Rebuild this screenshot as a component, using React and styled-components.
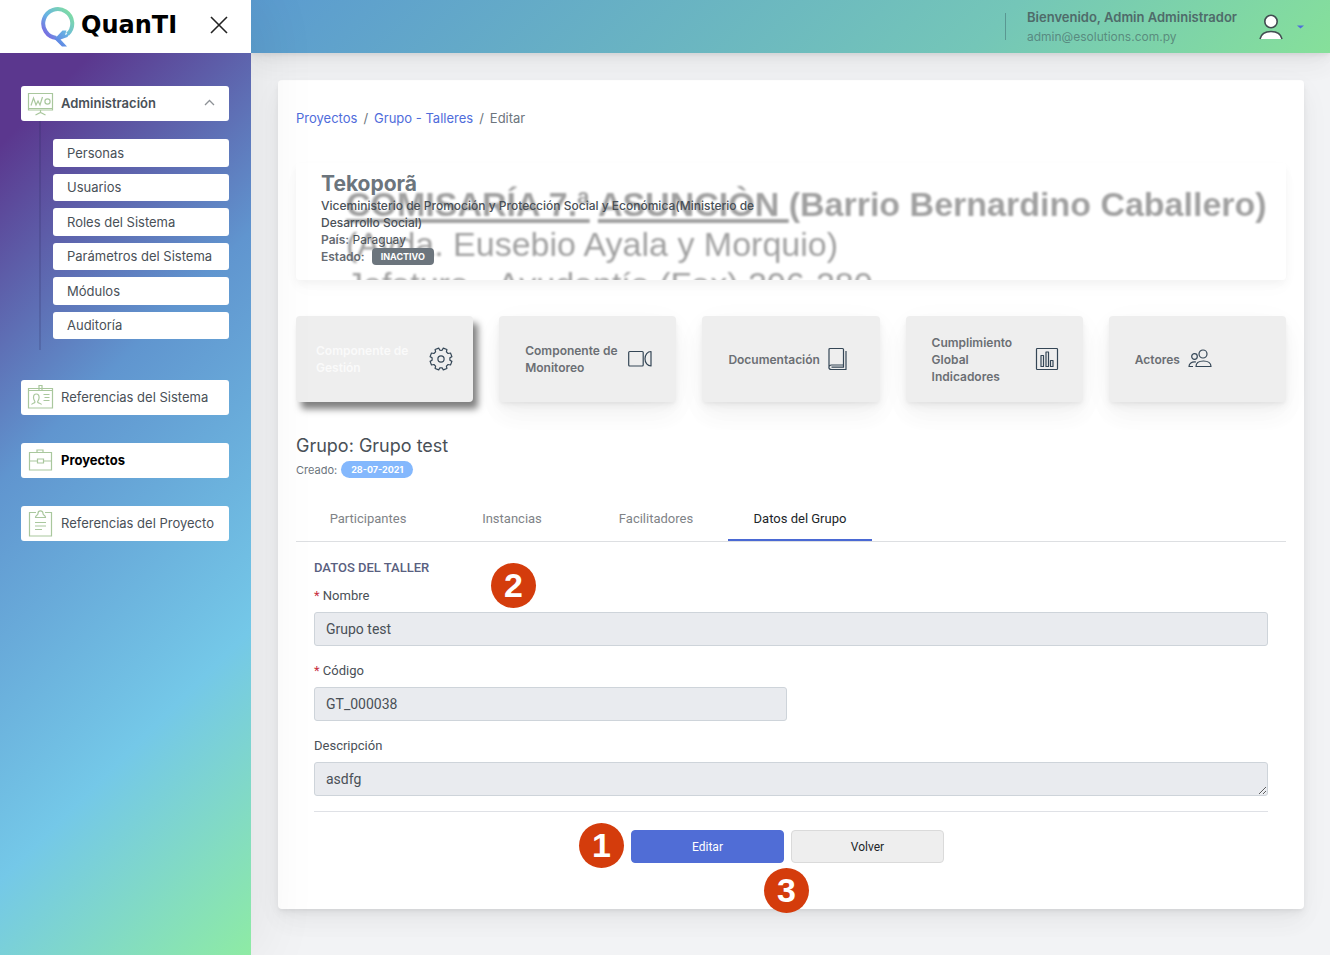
import React, { useState } from 'react';
import styled, { createGlobalStyle, css } from 'styled-components';

const GlobalStyle = createGlobalStyle`
  *, *::before, *::after {
    box-sizing: border-box;
  }
  body {
    margin: 0;
    background: #f2f3f5;
    color: #495057;
    font-family: Inter, "Liberation Sans", sans-serif;
    font-size: 13px;
  }
  button, input, textarea {
    font-family: inherit;
  }
`;

const softShadow = css`
  box-shadow:
    0 8px 35px rgba(4, 9, 20, 0.03),
    0 15px 23px rgba(4, 9, 20, 0.03),
    0 4px 9px rgba(4, 9, 20, 0.05),
    0 2px 3px rgba(4, 9, 20, 0.03);
`;

const Layout = styled.div`
  display: grid;
  grid-template-columns: 251px 1fr;
  min-height: 100vh;
`;

/* sidebar */

const Sidebar = styled.aside`
  position: relative;
  z-index: 2;
  background: linear-gradient(135deg, #5b378e 12%, #6095cf 40%, #74c8e8 73%, #8eeba4 100%);
  box-shadow: 7px 0 60px rgba(0, 0, 0, 0.07);
`;

const LogoBar = styled.div`
  display: flex;
  align-items: center;
  justify-content: space-between;
  height: 53px;
  padding: 0 23px 4px 40px;
  background: #fff;
`;

const Logo = styled.a`
  display: flex;
  align-items: center;
  gap: 5px;
  color: #000;
  font-family: "DejaVu Sans", sans-serif;
  font-size: 24px;
  font-weight: 700;
  line-height: 40px;
  text-decoration: none;

  svg {
    margin-top: 4px;
  }
`;

const IconButton = styled.button`
  display: flex;
  padding: 0;
  border: 0;
  background: none;
  cursor: pointer;
`;

const Menu = styled.nav`
  display: flex;
  flex-direction: column;
  gap: 28px;
  padding: 33px 22px 33px 21px;
`;

const menuBox = css`
  display: flex;
  align-items: center;
  width: 100%;
  border: 0;
  border-radius: 3px;
  background: #fff;
  color: #495057;
  font-size: 13px;
  text-decoration: none;
`;

const MenuItem = styled.a`
  ${menuBox}
  gap: 7px;
  height: 35px;
  padding: 0 14px 2px 6px;
  color: ${(p) => (p.$active ? '#000' : '#495057')};
  font-weight: ${(p) => (p.$active ? 700 : 400)};
`;

const MenuToggle = styled.button`
  ${menuBox}
  gap: 7px;
  height: 35px;
  padding: 0 14px 2px 6px;
  font-weight: 600;
  cursor: pointer;

  span {
    flex: 1;
    text-align: left;
  }
`;

const SubMenu = styled.ul`
  display: grid;
  grid-auto-rows: 1fr;
  gap: 7px;
  height: 229px;
  margin: 0 0 2px 18px;
  padding: 18px 0 11px 12px;
  border-left: 2px solid rgba(40, 40, 90, 0.2);
  list-style: none;
`;

const SubItem = styled.a`
  ${menuBox}
  height: 100%;
  padding: 0 14px;
`;

/* top bar */

const Main = styled.div`
  display: flex;
  flex-direction: column;
  min-width: 0;
`;

const Header = styled.header`
  position: relative;
  z-index: 1;
  display: flex;
  align-items: center;
  justify-content: flex-end;
  height: 53px;
  padding: 0 26px;
  background: linear-gradient(135deg, #5b9bd0, #74c6b8 68%, #86e09a);
  ${softShadow}
`;

const UserInfo = styled.div`
  display: flex;
  flex-direction: column;
  justify-content: center;
  height: 27px;
  padding-left: 21px;
  border-left: 1px solid rgba(50, 80, 90, 0.4);
  color: #4f6b6a;
  line-height: 19px;

  strong {
    font-weight: 600;
  }
  small {
    color: rgba(70, 100, 100, 0.65);
    font-size: 12px;
  }
`;

const UserButton = styled(IconButton)`
  align-items: center;
  gap: 14px;
  margin-left: 22px;
`;

/* content */

const Content = styled.main`
  flex: 1;
  padding: 27px 26px 46px 27px;
`;

const Panel = styled.section`
  padding: 28px 18px 46px;
  border-radius: 4px;
  background: #fff;
  ${softShadow}
`;

const Breadcrumb = styled.nav`
  display: flex;
  gap: 6px;
  line-height: 21px;
  color: #6c757d;

  a {
    color: #4f6cdb;
    text-decoration: none;
  }
`;

const Banner = styled.div`
  position: relative;
  height: 117px;
  padding: 8px 25px;
  overflow: hidden;
  border-radius: 4px;
`;

const BannerFrame = styled.div`
  margin-top: 34px;
  border-radius: 4px;
  box-shadow: 0 4px 9px rgba(4, 9, 20, 0.04), 0 8px 20px rgba(4, 9, 20, 0.02);
`;

const Backdrop = styled.div`
  position: absolute;
  top: 21px;
  left: 50px;
  color: #a0a0a0;
  font-family: "Liberation Sans", sans-serif;
  font-size: 34px;
  line-height: 40px;
  white-space: nowrap;
  filter: blur(1px);

  b u {
    text-decoration-thickness: 4px;
    text-underline-offset: 3px;
    text-decoration-skip-ink: none;
  }
`;

const BannerText = styled.div`
  position: relative;
  max-width: 440px;
  font-size: 12px;
  line-height: 17px;

  h1 {
    margin: 0;
    color: #6c757d;
    font-size: 21px;
    font-weight: 700;
    line-height: 26px;
  }
  p {
    margin: 0;
  }
  b {
    font-weight: 600;
    color: #666b72;
  }
`;

const Org = styled.p`
  font-weight: 500;
`;

const Badge = styled.span`
  display: inline-block;
  margin-left: ${(p) => (p.$pill ? 4 : 7)}px;
  padding: 0 ${(p) => (p.$pill ? 10 : 9)}px;
  border-radius: ${(p) => (p.$pill ? 9 : 4)}px;
  background: ${(p) => (p.$pill ? '#84b8fd' : '#6c757d')};
  color: #fff;
  font-size: 9px;
  font-weight: 700;
  line-height: 17px;
  vertical-align: top;
`;

const Cards = styled.div`
  display: grid;
  grid-template-columns: repeat(5, 1fr);
  gap: 26px;
  margin-top: 36px;
`;

const Card = styled.a`
  display: flex;
  align-items: center;
  gap: 8px;
  height: 86px;
  padding: 0 ${(p) => (p.$active ? '20px' : '24px 0 26px')};
  border-radius: 4px;
  background: #eee;
  color: ${(p) => (p.$active ? '#fafafa' : '#6b6f74')};
  font-size: 12px;
  font-weight: 600;
  line-height: 17px;
  text-decoration: none;
  ${softShadow}
  ${(p) => p.$active && css`
    box-shadow: 5px 7px 7px rgba(0, 0, 0, 0.5);
  `}

  svg {
    flex: none;
  }
`;

const GroupTitle = styled.h2`
  margin: 32px 0 0;
  font-size: 18px;
  font-weight: 400;
  line-height: 24px;
`;

const Created = styled.p`
  margin: 3px 0 0;
  color: #6c757d;
  font-size: 11px;
  line-height: 19px;
`;

const Tabs = styled.div`
  display: flex;
  margin-top: 16px;
  border-bottom: 1px solid #dddfe2;
`;

const Tab = styled.button`
  flex: 0 1 144px;
  height: 45px;
  padding: 2px 0 0;
  border: 0;
  border-bottom: 2px solid ${(p) => (p.$active ? '#4a69d4' : 'transparent')};
  background: none;
  color: ${(p) => (p.$active ? '#212529' : '#808387')};
  font-family: Roboto, sans-serif;
  font-size: 13px;
  cursor: pointer;
`;

const Form = styled.form`
  padding: 16px 18px 0;
  font-family: Roboto, sans-serif;

  h3 {
    margin: 0 0 9px;
    color: #596080;
    font-size: 13px;
    font-weight: 500;
    line-height: 19px;
  }
`;

const Field = styled.div`
  width: ${(p) => (p.$half ? 'calc(50% - 4px)' : '100%')};
  margin-bottom: 15px;

  label {
    display: block;
    margin-bottom: 7px;
    font-size: 13px;
    line-height: 19px;
  }
  i {
    color: #c8303f;
    font-style: normal;
  }
`;

const Input = styled.input`
  display: block;
  width: 100%;
  height: 34px;
  padding: 6px 11px;
  border: 1px solid #ced4da;
  border-radius: 3px;
  background: #e9ebef;
  color: #495057;
  font-size: 14px;
  line-height: 20px;
`;

const Actions = styled.div`
  display: flex;
  justify-content: center;
  gap: 7px;
  padding: 18px 7px 0 0;
  border-top: 1px solid #dfe1e6;
`;

const Button = styled.button`
  position: relative;
  width: 153px;
  height: 33px;
  border: 1px solid ${(p) => (p.$primary ? '#506dd6' : '#dadada')};
  border-radius: 4px;
  background: ${(p) => (p.$primary ? '#506dd6' : '#eee')};
  color: ${(p) => (p.$primary ? '#fff' : '#212529')};
  font-size: 12px;
  cursor: pointer;
`;

const Marker = styled.span`
  position: absolute;
  top: ${(p) => p.$top}px;
  left: ${(p) => p.$left}px;
  width: 45px;
  height: 45px;
  border-radius: 50%;
  background: #d43c0c;
  color: #fff;
  font-family: "Liberation Sans", sans-serif;
  font-size: 34px;
  font-weight: 700;
  line-height: 45px;
  text-align: center;
`;

const FormHead = styled.div`
  position: relative;
`;

/* icons */

const LogoMark = () => (
  <svg width="36" height="41" viewBox="0 0 36 41" fill="none">
    <defs>
      <linearGradient id="ring" x1="3" y1="30" x2="30" y2="6" gradientUnits="userSpaceOnUse">
        <stop offset="0" stopColor="#7a5ce0" />
        <stop offset="0.45" stopColor="#68b4e4" />
        <stop offset="1" stopColor="#7fdca4" />
      </linearGradient>
      <linearGradient id="tail" x1="17" y1="36" x2="30" y2="24" gradientUnits="userSpaceOnUse">
        <stop offset="0" stopColor="#5f86e4" />
        <stop offset="1" stopColor="#6cc4e2" />
      </linearGradient>
    </defs>
    <path d="M16.500 32A14.500 14.500 0 1 1 27.500 28.300" stroke="url(#ring)" strokeWidth="4" />
    <path d="M22.500 24.500h4l-1.500 4.500 4.500-2-2 4-7 2.500 6.500 7h-5L14.500 33z" fill="url(#tail)" />
  </svg>
);

const CloseIcon = () => (
  <svg width="18" height="18" viewBox="0 0 18 18" stroke="#222" strokeWidth="1.6">
    <path d="M1 1l16 16M17 1 1 17" />
  </svg>
);

const greenLine = { width: 27, height: 28, viewBox: '0 0 27 28', fill: 'none', stroke: '#a9c79d', strokeWidth: 1.2 };

const BoardIcon = () => (
  <svg {...greenLine}>
    <path d="M1.500 4.500h24v16.500h-24zM1.500 19.500h24M13.500 21v2.500M8.500 26l5-2.500 5 2.500" />
    <path d="M4 16.500l2.500-7.500 2.500 7 2-4 2 4 2.500-8" />
    <circle cx="20.500" cy="12.500" r="2.600" />
  </svg>
);

const IdIcon = () => (
  <svg {...greenLine}>
    <path d="M1.500 5.500h24v19.500h-24zM1.500 7.500h10M15.500 7.500h10M12 2.500h3v5h-3zM16.500 11.500h6M17.500 14.500h5M16.500 17.500h6" />
    <path d="M4.500 21.500c1-1.500 3-1 3.500-2.500 0-1-1.500-2-1.500-4.500s1-3.500 2.800-3.500 2.800 1 2.800 3.500-1.500 3.500-1.500 4.500c.5 1.500 3 1 4 2.500" />
  </svg>
);

const CaseIcon = () => (
  <svg {...greenLine}>
    <path d="M2.500 6.500h22v17.500h-22zM10 6.500v-2.500h6v2.500M2.500 15h8M16.500 15h8M10.500 13h6v4h-6z" />
  </svg>
);

const ClipboardIcon = () => (
  <svg {...greenLine}>
    <path d="M9 3.500H2.500v23.500h22v-23.500H18M8 13.500h11M8 17h11M8 20.500h7" />
    <path d="M8.500 8.500h10c0-2.500-2.500-2-2.500-4 0-3.500-5-3.500-5 0 0 2-2.500 1.500-2.500 4z" />
  </svg>
);

const ChevronUp = () => (
  <svg width="11" height="7" viewBox="0 0 11 7" fill="none" stroke="#8d9196" strokeWidth="1.3">
    <path d="M1 6l4.500-4.500L10 6" />
  </svg>
);

const UserIcon = () => (
  <svg width="24" height="26" viewBox="0 0 24 26" fill="#fff" stroke="#414c50" strokeWidth="1.6">
    <circle cx="12" cy="7.500" r="6.200" />
    <path d="M1 25c1-4.500 5-7.500 11-7.500s10 3 11 7.500" />
  </svg>
);

const Caret = () => (
  <svg width="7" height="4" viewBox="0 0 7 4" fill="#4f6cdb">
    <path d="M0 .5h7L3.500 3.500z" />
  </svg>
);

const darkLine = { width: 24, height: 24, viewBox: '0 0 24 24', fill: 'none', stroke: '#344656', strokeWidth: 1.2, strokeLinejoin: 'round' };

const GearIcon = () => (
  <svg {...darkLine}>
    <path d="M12 3.300l1.300-.2 1-2 3.600 1.400-.5 2.300 1.700 1.700 2.400-.5 1.400 3.600-2 1.100v2.600l2 1.100-1.400 3.600-2.400-.5-1.700 1.700.5 2.300-3.600 1.400-1-2h-2.600l-1 2-3.600-1.400.5-2.300-1.700-1.700-2.400.5L1.100 14.400l2-1.100v-2.600l-2-1.100L2.500 6l2.400.5 1.700-1.700-.5-2.300 3.600-1.400 1 2z" />
    <circle cx="12" cy="12" r="3.100" />
  </svg>
);

const VideoIcon = () => (
  <svg {...darkLine}>
    <rect x=".7" y="4.500" width="14.500" height="14.500" rx="1" />
    <path d="M23 4.500v14.500c-3.500 0-6-3-6-7.200S19.500 4.500 23 4.500z" />
  </svg>
);

const BookIcon = () => (
  <svg {...darkLine} width="20" viewBox="0 0 20 24">
    <path d="M2 1.500h12.500q1 0 1 1v15.500H3.500c-3.500 0-3.500 4.500 0 4.500h14.500V4M2 1.500q-1 0-1 1V20M3.500 20.200h12V18" />
  </svg>
);

const ChartIcon = () => (
  <svg {...darkLine}>
    <rect x="1.500" y="1.500" width="21" height="21" rx=".8" />
    <path d="M6 8.500h2.500v11H6zM11 5h2.500v14.500H11zM15.500 13.500H18v6h-2.500z" />
  </svg>
);

const PeopleIcon = () => (
  <svg {...darkLine}>
    <circle cx="15" cy="7" r="4" />
    <circle cx="6.500" cy="9.500" r="2.800" />
    <path d="M8 19.500c0-3.500 3-5.500 7.500-5.500s7.500 2 7.500 5.500zM8 15c-4.500-.5-7 1.500-7 4.500h4" />
  </svg>
);

const subItems = ['Personas', 'Usuarios', 'Roles del Sistema', 'Parámetros del Sistema', 'Módulos', 'Auditoría'];

const cards = [
  { title: 'Componente de Gestión', Icon: GearIcon, active: true },
  { title: 'Componente de Monitoreo', Icon: VideoIcon },
  { title: 'Documentación', Icon: BookIcon },
  { title: 'Cumplimiento Global Indicadores', Icon: ChartIcon },
  { title: 'Actores', Icon: PeopleIcon },
];

const tabs = ['Participantes', 'Instancias', 'Facilitadores', 'Datos del Grupo'];

function SideMenu() {
  const [open, setOpen] = useState(true);

  return (
    <Sidebar>
      <LogoBar>
        <Logo href="#inicio"><LogoMark />QuanTI</Logo>
        <IconButton type="button" aria-label="Cerrar menú"><CloseIcon /></IconButton>
      </LogoBar>
      <Menu>
        <div>
          <MenuToggle type="button" aria-expanded={open} onClick={() => setOpen(!open)}>
            <BoardIcon /><span>Administración</span><ChevronUp />
          </MenuToggle>
          {open && (
            <SubMenu>
              {subItems.map((item) => (
                <li key={item}><SubItem href="#admin">{item}</SubItem></li>
              ))}
            </SubMenu>
          )}
        </div>
        <MenuItem href="#sistema"><IdIcon />Referencias del Sistema</MenuItem>
        <MenuItem href="#proyectos" $active><CaseIcon />Proyectos</MenuItem>
        <MenuItem href="#referencias"><ClipboardIcon />Referencias del Proyecto</MenuItem>
      </Menu>
    </Sidebar>
  );
}

function ProjectBanner() {
  return (
    <BannerFrame>
      <Banner>
        <Backdrop>
          <b><u>COMISARÍA 7.ª</u> <u>ASUNCIÒN </u>(Barrio Bernardino Caballero)</b>
          <div>(Avda. Eusebio Ayala y Morquio)</div>
          <div>Jefatura - Ayudantía (Fax) 206-280</div>
        </Backdrop>
        <BannerText>
          <h1>Tekoporã</h1>
          <Org>Viceministerio de Promoción y Protección Social y Económica(Ministerio de Desarrollo Social)</Org>
          <p><b>País:</b> Paraguay</p>
          <p><b>Estado:</b><Badge>INACTIVO</Badge></p>
        </BannerText>
      </Banner>
    </BannerFrame>
  );
}

function GroupForm() {
  return (
    <Form onSubmit={(e) => e.preventDefault()}>
      <FormHead>
        <h3>DATOS DEL TALLER</h3>
        <Marker $top={5} $left={177}>2</Marker>
      </FormHead>
      <Field>
        <label htmlFor="nombre"><i>*</i> Nombre</label>
        <Input id="nombre" defaultValue="Grupo test" readOnly />
      </Field>
      <Field $half>
        <label htmlFor="codigo"><i>*</i> Código</label>
        <Input id="codigo" defaultValue="GT_000038" readOnly />
      </Field>
      <Field>
        <label htmlFor="descripcion">Descripción</label>
        <Input as="textarea" id="descripcion" defaultValue="asdfg" readOnly />
      </Field>
      <Actions>
        <Button type="submit" $primary>
          Editar
          <Marker $top={-8} $left={-53}>1</Marker>
        </Button>
        <Button type="button">
          Volver
          <Marker $top={37} $left={-28}>3</Marker>
        </Button>
      </Actions>
    </Form>
  );
}

export default function App() {
  const [tab, setTab] = useState('Datos del Grupo');

  return (
    <>
      <GlobalStyle />
      <Layout>
        <SideMenu />
        <Main>
          <Header>
            <UserInfo>
              <strong>Bienvenido, Admin Administrador</strong>
              <small>admin@esolutions.com.py</small>
            </UserInfo>
            <UserButton type="button" aria-label="Cuenta"><UserIcon /><Caret /></UserButton>
          </Header>
          <Content>
            <Panel>
              <Breadcrumb>
                <a href="#proyectos">Proyectos</a>
                <span>/</span>
                <a href="#talleres">Grupo - Talleres</a>
                <span>/</span>
                <span>Editar</span>
              </Breadcrumb>
              <ProjectBanner />
              <Cards>
                {cards.map(({ title, Icon, active }) => (
                  <Card key={title} href="#componente" $active={active}>
                    <span>{title}</span>
                    <Icon />
                  </Card>
                ))}
              </Cards>
              <GroupTitle>Grupo: Grupo test</GroupTitle>
              <Created>Creado:<Badge $pill>28-07-2021</Badge></Created>
              <Tabs role="tablist">
                {tabs.map((name) => (
                  <Tab
                    key={name}
                    type="button"
                    role="tab"
                    aria-selected={tab === name}
                    $active={tab === name}
                    onClick={() => setTab(name)}
                  >
                    {name}
                  </Tab>
                ))}
              </Tabs>
              <GroupForm />
            </Panel>
          </Content>
        </Main>
      </Layout>
    </>
  );
}
